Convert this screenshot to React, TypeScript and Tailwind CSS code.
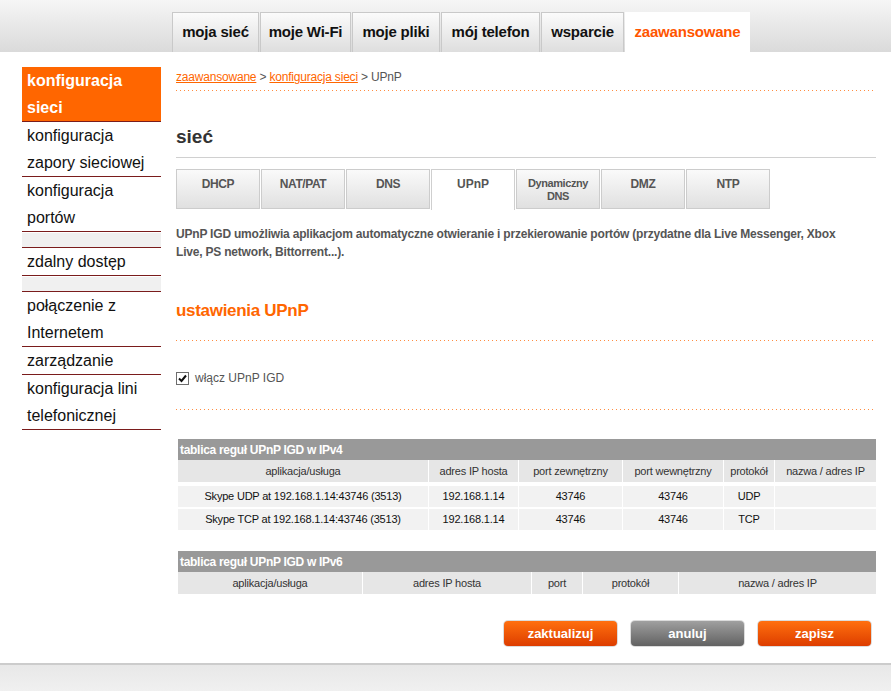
import React from "react";

const NARROW = "font-['Liberation_Sans_Narrow','Arial_Narrow','Liberation_Sans',sans-serif]";

const topTabs = [
  { t: "moja sieć", w: "w-[87px]" },
  { t: "moje Wi-Fi", w: "w-[91px]" },
  { t: "moje pliki", w: "w-[88px]" },
  { t: "mój telefon", w: "w-[99px]" },
  { t: "wsparcie", w: "w-[83px]" },
];

const sideItems: { label: string; active?: boolean; spacer?: boolean }[] = [
  { label: "konfiguracja sieci", active: true },
  { label: "konfiguracja zapory sieciowej" },
  { label: "konfiguracja portów" },
  { label: "", spacer: true },
  { label: "zdalny dostęp" },
  { label: "", spacer: true },
  { label: "połączenie z Internetem" },
  { label: "zarządzanie" },
  { label: "konfiguracja lini telefonicznej" },
];

const subTabs = ["DHCP", "NAT/PAT", "DNS", "UPnP", "Dynamiczny DNS", "DMZ", "NTP"];

const Dotted = () => (
  <div className="h-px w-full bg-[linear-gradient(to_right,#ff8c40_1px,transparent_1px)] bg-[length:4px_1px]" />
);

const Header = () => (
  <div className="h-[52px] bg-gradient-to-b from-[#f6f6f6] to-[#dadada] flex items-end pl-[172px]">
    {topTabs.map(({ t, w }) => (
      <div
        key={t}
        className={`${w} h-10 mr-px flex items-center justify-center whitespace-nowrap border border-[#c9c9c9] border-b-0 bg-gradient-to-b from-[#fbfbfb] to-[#dedede] text-[15px] font-bold tracking-[-0.2px] text-[#111] font-['Liberation_Sans',sans-serif]`}
      >
        {t}
      </div>
    ))}
    <div className="h-10 w-[125px] flex items-center justify-center bg-white text-[15px] font-bold tracking-[-0.2px] text-[#ff5500] font-['Liberation_Sans',sans-serif]">
      zaawansowane
    </div>
  </div>
);

const Sidebar = () => (
  <div className="w-[139px] shrink-0 font-['Liberation_Sans',sans-serif]">
    {sideItems.map((it, i) =>
      it.spacer ? (
        <div key={i} className="h-[15px] bg-[#f0f0f0] border-b border-[#7a1c1c] mt-px" />
      ) : (
        <div
          key={i}
          className={
            it.active
              ? "bg-[#ff6600] text-white font-bold text-[16px] leading-[27px] pl-[5px] border-b border-[#7a1c1c]"
              : "text-[#111] text-[16px] leading-[27px] pl-[5px] border-b border-[#7a1c1c]"
          }
        >
          {it.label}
        </div>
      )
    )}
  </div>
);

const ipv4Cols = [
  { h: "aplikacja/usługa", w: "w-[251px]" },
  { h: "adres IP hosta", w: "w-[90px]" },
  { h: "port zewnętrzny", w: "w-[104px]" },
  { h: "port wewnętrzny", w: "w-[101px]" },
  { h: "protokół", w: "w-[51px]" },
  { h: "nazwa / adres IP", w: "flex-1" },
];

const ipv4Rows = [
  ["Skype UDP at 192.168.1.14:43746 (3513)", "192.168.1.14", "43746", "43746", "UDP", ""],
  ["Skype TCP at 192.168.1.14:43746 (3513)", "192.168.1.14", "43746", "43746", "TCP", ""],
];

const ipv6Cols = [
  { h: "aplikacja/usługa", w: "w-[185px]" },
  { h: "adres IP hosta", w: "w-[169px]" },
  { h: "port", w: "w-[51px]" },
  { h: "protokół", w: "w-[96px]" },
  { h: "nazwa / adres IP", w: "flex-1" },
];

const Table = ({
  title,
  cols,
  rows,
}: {
  title: string;
  cols: { h: string; w: string }[];
  rows: string[][];
}) => (
  <div className={`ml-[2px] text-[11px] tracking-[-0.2px] ${NARROW}`}>
    <div className="h-[21px] bg-[#999999] text-white pl-[2px] flex items-center text-[12px] font-bold tracking-[-0.3px]">
      {title}
    </div>
    <div className="flex h-[22px] bg-[#e6e6e6] text-[#333]">
      {cols.map((c, i) => (
        <div
          key={i}
          className={`${c.w} flex items-center justify-center whitespace-nowrap ${i < cols.length - 1 ? "border-r border-white" : ""}`}
        >
          {c.h}
        </div>
      ))}
    </div>
    {rows.length > 0 && (
      <div className="pt-[4px] flex flex-col gap-[2px]">
        {rows.map((r, ri) => (
          <div key={ri} className="flex h-[21px] bg-[#f2f2f2] text-[#111]">
            {r.map((cell, i) => (
              <div
                key={i}
                className={`${cols[i].w} flex items-center justify-center whitespace-nowrap ${i < cols.length - 1 ? "border-r border-white" : ""}`}
              >
                {cell}
              </div>
            ))}
          </div>
        ))}
      </div>
    )}
  </div>
);

const Button = ({ label, gray }: { label: string; gray?: boolean }) => (
  <div className="p-px rounded-[5px] bg-[#dcdcdc]">
    <div
      className={`w-[113px] h-[25px] rounded-[4px] flex items-center justify-center text-white font-bold text-[13px] font-['Liberation_Sans',sans-serif] ${
        gray
          ? "bg-gradient-to-b from-[#a0a0a0] to-[#626262]"
          : "bg-gradient-to-b from-[#ff6f0f] to-[#dd3c00]"
      }`}
    >
      {label}
    </div>
  </div>
);

const Content = () => (
  <div className={`w-[700px] ml-[15px] ${NARROW}`}>
    <div className="pt-[2px] text-[12px] text-[#555] leading-[16px] tracking-[-0.2px]">
      <span className="text-[#ff6600] underline">zaawansowane</span> &gt;{" "}
      <span className="text-[#ff6600] underline">konfiguracja sieci</span> &gt; UPnP
    </div>
    <div className="mt-[5px]">
      <Dotted />
    </div>
    <div className="mt-[34px] text-[19px] font-bold text-[#333] leading-[24px]">sieć</div>
    <div className="mt-[8px] h-px bg-[#d0d0d0]" />
    <div className="mt-[11px] flex gap-px">
      {subTabs.map((t) =>
        t === "UPnP" ? (
          <div
            key={t}
            className="w-[84px] h-[41px] bg-white border border-b-0 border-[#cfcfcf] text-[12px] font-bold text-[#555] text-center pt-[8px] leading-[13px]"
          >
            {t}
          </div>
        ) : (
          <div
            key={t}
            className={`w-[84px] h-[40px] bg-gradient-to-b from-[#fafafa] to-[#e0e0e0] border border-[#cccccc] font-bold text-[#555] text-center leading-[13px] tracking-[-0.4px] ${
              t === "Dynamiczny DNS" ? "text-[11px] pt-[7px]" : "text-[12px] pt-[8px]"
            }`}
          >
            {t === "Dynamiczny DNS" ? (
              <>
                Dynamiczny
                <br />
                DNS
              </>
            ) : (
              t
            )}
          </div>
        )
      )}
    </div>
    <p className="mt-[15px] text-[12px] font-bold text-[#555] leading-[18px] tracking-[-0.2px]">
      UPnP IGD umożliwia aplikacjom automatyczne otwieranie i przekierowanie portów (przydatne dla Live Messenger, Xbox
      <br />
      Live, PS network, Bittorrent...).
    </p>
    <div className="mt-[40px] text-[17px] font-bold text-[#ff6600] leading-[20px] tracking-[-0.3px]">
      ustawienia UPnP
    </div>
    <div className="mt-[19px]">
      <Dotted />
    </div>
    <div className="mt-[28px] flex items-center gap-[6px] text-[12px] text-[#555]">
      <span className="w-[13px] h-[13px] border border-[#6d6d6d] bg-white flex items-center justify-center">
        <svg width="11" height="11" viewBox="0 0 11 11">
          <path d="M2 5.5 L4.5 8 L9 2.5" stroke="#111" strokeWidth="2" fill="none" />
        </svg>
      </span>
      <span>włącz UPnP IGD</span>
    </div>
    <div className="mt-[22px]">
      <Dotted />
    </div>
    <div className="mt-[29px]">
      <Table title="tablica reguł UPnP IGD w IPv4" cols={ipv4Cols} rows={ipv4Rows} />
    </div>
    <div className="mt-[21px]">
      <Table title="tablica reguł UPnP IGD w IPv6" cols={ipv6Cols} rows={[]} />
    </div>
    <div className="mt-[26px] flex justify-end gap-[12px] pr-[4px]">
      <Button label="zaktualizuj" />
      <Button label="anuluj" gray />
      <Button label="zapisz" />
    </div>
  </div>
);

export default function App() {
  return (
    <div className="min-h-[691px] bg-white flex flex-col">
      <Header />
      <div className="flex pl-[22px] pt-[15px] pb-[16px]">
        <Sidebar />
        <Content />
      </div>
      <div className="flex-1 border-t-2 border-[#cccccc] bg-gradient-to-b from-[#e8e8e8] to-[#f0f0f0]" />
    </div>
  );
}
